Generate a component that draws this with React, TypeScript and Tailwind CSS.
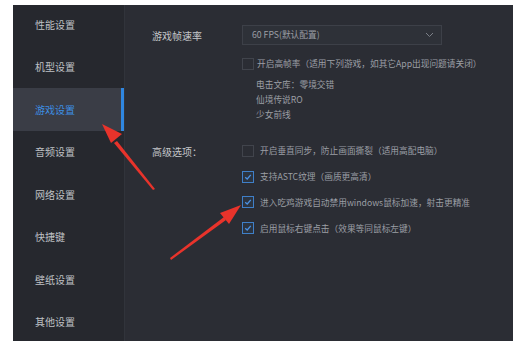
import React from "react";

const menu = ["性能设置", "机型设置", "游戏设置", "音频设置", "网络设置", "快捷键", "壁纸设置", "其他设置"];

function Box({ checked }: { checked?: boolean }) {
  return (
    <div
      className={
        "w-[12px] h-[12px] shrink-0 border flex items-center justify-center " +
        (checked ? "border-[#3f7fc8] bg-[#2c3440]" : "border-[#41444c] bg-[#2b2d34]")
      }
    >
      {checked && (
        <svg width="8" height="8" viewBox="0 0 8 8">
          <path d="M1.2 4.2 L3.2 6 L6.8 1.8" fill="none" stroke="#4a90e2" strokeWidth="1.3" />
        </svg>
      )}
    </div>
  );
}

export default function App() {
  const font = { fontFamily: '"Noto Sans CJK SC", "Noto Sans", sans-serif' };
  return (
    <div className="w-[518px] h-[346px] bg-white relative overflow-hidden" style={font}>
      <div className="absolute left-[13px] top-[5px] w-[500px] h-[336px] flex bg-[#2b2d34]">
        <div className="w-[112px] h-full bg-[#26282e] border-r border-[#31343b] flex flex-col">
          <div className="-mt-[2px]">
            {menu.map((m, i) => (
              <div
                key={m}
                className={
                  "h-[42.5px] flex items-center pl-[22px] text-[10px] relative " +
                  (i === 2 ? "bg-[#3a3d46] text-[#3d8fe4]" : "text-[#bfc1c5]")
                }
              >
                {m}
                {i === 2 && <div className="absolute right-0 top-0 bottom-0 w-[3px] bg-[#2f86e0]" />}
              </div>
            ))}
          </div>
        </div>
        <div className="flex-1 pl-[27px] pt-[20px] text-[8.7px] text-[#9c9fa5]">
          <div className="flex items-center h-[20px]">
            <div className="w-[90px] text-[10px] text-[#c3c5c9]">游戏帧速率</div>
            <div className="w-[200px] h-[20px] border border-[#3d4048] bg-[#2e3138] flex items-center justify-between pl-[9px] pr-[7px]">
              <span className="text-[#9c9fa5]">60 FPS(默认配置)</span>
              <svg width="9" height="6" viewBox="0 0 9 6">
                <path d="M1 1 L4.5 4.5 L8 1" fill="none" stroke="#7c8088" strokeWidth="1" />
              </svg>
            </div>
          </div>
          <div className="ml-[90px] mt-[13px] flex flex-col">
            <div className="flex items-center gap-[2px] h-[12px]">
              <Box />
              <span className="ml-[1px]">开启高帧率（适用下列游戏，如其它App出现问题请关闭）</span>
            </div>
            <div className="pl-[14px] mt-[7px] flex flex-col leading-[15px]">
              <span>电击文库：零境交错</span>
              <span>仙境传说RO</span>
              <span>少女前线</span>
            </div>
          </div>
          <div className="flex mt-[23px]">
            <div className="w-[90px] text-[10px] text-[#c3c5c9] h-[12px] flex items-center">高级选项：</div>
            <div className="flex flex-col gap-[13.7px]">
              <div className="flex items-center gap-[6px] h-[12px]">
                <Box />
                <span>开启垂直同步，防止画面撕裂（适用高配电脑）</span>
              </div>
              <div className="flex items-center gap-[6px] h-[12px]">
                <Box checked />
                <span>支持ASTC纹理（画质更高清）</span>
              </div>
              <div className="flex items-center gap-[6px] h-[12px]">
                <Box checked />
                <span>进入吃鸡游戏自动禁用windows鼠标加速，射击更精准</span>
              </div>
              <div className="flex items-center gap-[6px] h-[12px]">
                <Box checked />
                <span>启用鼠标右键点击（效果等同鼠标左键）</span>
              </div>
            </div>
          </div>
        </div>
      </div>
      <svg className="absolute left-0 top-0 pointer-events-none" width="518" height="346" viewBox="0 0 518 346">
        <polygon points="153,190 155,189 117,141 114,143" fill="#e8332b" />
        <polygon points="102,124 122,134 111,143" fill="#e8332b" />
        <polygon points="170,258 171,260 226,220 224,217" fill="#e8332b" />
        <polygon points="241,205 220,213 229,224" fill="#e8332b" />
      </svg>
    </div>
  );
}
